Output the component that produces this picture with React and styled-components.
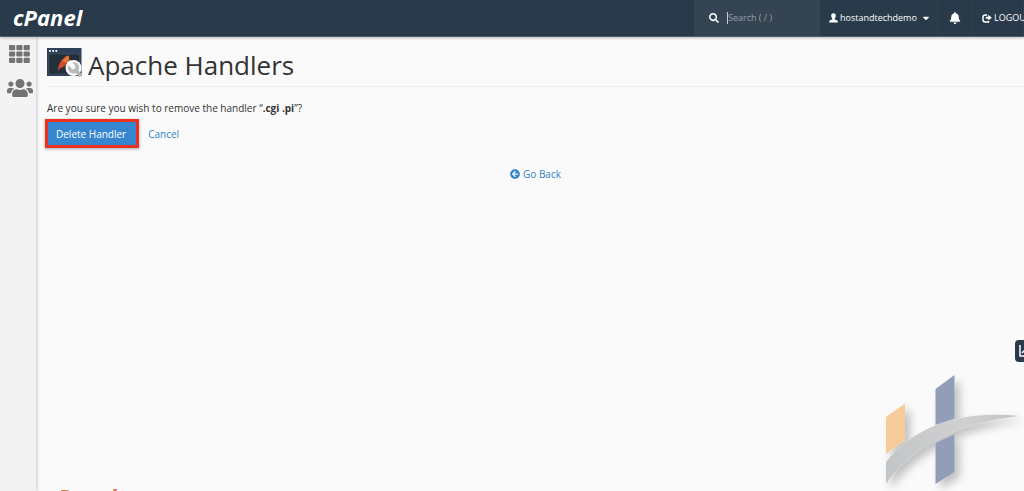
import React, { useState } from "react";
import styled, { createGlobalStyle } from "styled-components";
import { FaSearch, FaBell, FaCaretDown, FaUsers, FaArrowCircleLeft } from "react-icons/fa";


const GlobalStyle = createGlobalStyle`
    * {
        box-sizing: border-box;
    }

    body {
        margin: 0;
        background: #fafafa;
        color: #333333;
        font-family: "Open Sans", "Noto Sans", sans-serif;
        font-size: 10px;
        line-height: 16px;
    }

    a {
        color: #2f83c9;
        text-decoration: none;
    }

    svg {
        flex-shrink: 0;
    }
`;

const Page = styled.div`
    position: relative;
    display: flex;
    flex-direction: column;
    height: 100vh;
    overflow: hidden;
`;

const Header = styled.header`
    display: flex;
    flex-shrink: 0;
    height: 37px;
    overflow: hidden;
    background: #293a4a;
    border-bottom: 1px solid #4c5d6d;
`;

const HeaderShadow = styled.div`
    position: relative;
    z-index: 1;
    box-shadow: 0 1px 3px rgba(0, 0, 0, 0.25);
`;

const Brand = styled.a`
    color: ${(props) => props.$color || "#ffffff"};
    font-family: "Open Sans", sans-serif;
    font-size: 22px;
    font-style: italic;
    font-weight: 700;
    line-height: 34px;
`;

const HomeLink = styled.div`
    flex: 1;
    padding-left: 13px;
`;

const SearchBox = styled.label`
    display: flex;
    align-items: center;
    gap: 8px;
    width: 126px;
    padding-left: 15px;
    background: #354453;
    color: #ffffff;
`;

const Caret = styled.span`
    width: 1px;
    height: 12px;
    margin-right: -8px;
    background: #c5cbd1;
`;

const SearchInput = styled.input`
    width: 80px;
    padding: 0;
    border: 0;
    outline: 0;
    background: transparent;
    color: #ffffff;
    font: inherit;
    font-size: 9px;

    &::placeholder {
        color: #98a0a8;
        opacity: 1;
    }
`;

const NavButton = styled.button`
    display: flex;
    align-items: center;
    justify-content: ${(props) => (props.$center ? "center" : "flex-start")};
    gap: 2px;
    flex-shrink: 0;
    width: ${(props) => props.$width};
    padding: 0 0 0 ${(props) => props.$pad || "0"};
    border: 0;
    border-right: 1px solid #30404f;
    background: transparent;
    color: #ffffff;
    font: inherit;
    font-size: 9px;
    white-space: nowrap;

    span {
        margin-right: 2px;
    }
`;

const Body = styled.div`
    display: flex;
    flex: 1;
    min-height: 0;
`;

const Sidebar = styled.nav`
    display: flex;
    flex-direction: column;
    align-items: center;
    gap: 12px;
    flex-shrink: 0;
    width: 36px;
    padding: 8px 0 0 3px;
    background: #f3f3f3;
    box-shadow: 1px 0 3px rgba(0, 0, 0, 0.2);
`;

const SideLink = styled.a`
    display: flex;
    color: #737373;
`;

const Content = styled.main`
    display: flex;
    flex-direction: column;
    flex: 1;
    padding: 8px 0 0 11px;
`;

const PageHeading = styled.h1`
    display: flex;
    align-items: center;
    gap: 6px;
    margin: 0 0 13px;
    padding-bottom: 1px;
    border-bottom: 1px solid #eeeeee;
    font-size: 26px;
    font-weight: 400;
    line-height: 40px;
`;

const Message = styled.p`
    margin: 0 0 3px;
`;

const Actions = styled.div`
    display: flex;
    align-items: center;
    gap: 9px;
    margin-left: -2px;
`;

const DeleteButton = styled.button`
    height: 29px;
    padding: 0 10px 0 8px;
    border: 3px solid #e8321f;
    background: #3686cf;
    box-shadow: 0 1px 3px rgba(0, 0, 0, 0.35);
    color: #ffffff;
    font: inherit;
`;

const BackLink = styled.a`
    display: flex;
    align-items: center;
    align-self: center;
    gap: 3px;
    margin-top: 18px;
`;

const Footer = styled.footer`
    display: flex;
    height: 12px;
    margin-top: auto;
`;

const StatsButton = styled.button`
    position: absolute;
    top: 340px;
    right: -13px;
    display: flex;
    align-items: center;
    width: 22px;
    height: 22px;
    padding: 0 0 0 4px;
    border: 0;
    border-radius: 4px;
    background: #293a4a;
`;

const Watermark = styled.svg`
    position: absolute;
    right: 0;
    bottom: 0;
    pointer-events: none;
`;

const HandlerIcon = () => (
    <svg width="35" height="34" viewBox="0 0 35 34" aria-hidden="true">
        <rect width="34.5" height="28" fill="#2e4058" />
        <rect x="2" y="6" width="30.5" height="20" fill="#21303a" stroke="#46566a" strokeWidth="0.6" />
        <g fill="#ffffff">
            <rect x="2" y="2" width="1.8" height="1.8" />
            <rect x="5.2" y="2" width="1.8" height="1.8" />
            <rect x="8.4" y="2" width="1.8" height="1.8" />
        </g>
        <path d="M11 22.5C11 17.5 14 10.5 21 7.5c1.6 1 1.4 3.5.4 5.5C19.5 17 16 19.8 12.8 20.2L11.5 22.8Z" fill="#cf4b28" />
        <path d="M15 13C16.8 10 19 8.3 21 7.5c1.6 1 1.4 3.5.4 5.5L20 15.2Z" fill="#e9722f" />
        <circle cx="26.5" cy="20" r="8" fill="#fafafa" />
        <path d="M28.5 22 33 27" fill="none" stroke="#b9b9b9" strokeWidth="3.6" strokeLinecap="round" />
        <circle cx="26.5" cy="19.8" r="5.6" fill="#b9b9b9" />
        <path d="M20 15 25.2 21.5 28.4 20.2 27.8 17 23 12Z" fill="#fafafa" />
    </svg>
);

const UserIcon = () => (
    <svg width="9" height="10" viewBox="0 0 9 10" fill="currentColor" aria-hidden="true">
        <path d="M4.5.2C6.1.2 6.9 1.3 6.8 2.8 6.7 4.2 6 5 5.7 5.5v.8c.6.6 3.1.9 3.1 2.2v1H.2v-1c0-1.3 2.5-1.6 3.1-2.2v-.8C3 5 2.3 4.2 2.2 2.8 2.1 1.3 2.9.2 4.5.2Z" />
    </svg>
);

const LogoutIcon = () => (
    <svg width="10" height="9" viewBox="0 0 10 9" aria-hidden="true">
        <path d="M5.2 1H3.3C1.8 1 1 1.8 1 3.2v2.6C1 7.2 1.8 8 3.3 8h3.2V7" fill="none" stroke="currentColor" strokeWidth="1.5" />
        <path d="M6.3.8 9.8 3.7 6.3 6.5V4.7H3.8v-2h2.5Z" fill="currentColor" />
    </svg>
);

const GridIcon = () => (
    <svg width="21" height="18" viewBox="0 0 21 18" fill="currentColor" aria-hidden="true">
        {[0, 1, 2].map((row) =>
            [0, 1, 2].map((col) => (
                <rect key={`${row}-${col}`} x={col * 7.3} y={row * 6.4} width="6.2" height="5.2" rx="1" />
            ))
        )}
    </svg>
);

const HostLogo = () => (
    <Watermark width="160" height="161" viewBox="0 0 160 161" aria-hidden="true">
        <defs>
            <linearGradient id="swoosh">
                <stop offset="0" stopColor="#c3c6c8" />
                <stop offset="0.6" stopColor="#cfd0d1" />
                <stop offset="1" stopColor="#c0c2c3" />
            </linearGradient>
            <filter id="soft" x="-20%" y="-20%" width="150%" height="150%">
                <feDropShadow dx="5" dy="5" stdDeviation="4" floodColor="#000000" floodOpacity="0.24" />
            </filter>
        </defs>
        <g filter="url(#soft)">
            <path d="M22 87 41 73.5V110.5L22 124Z" fill="#f6cc9b" />
            <path d="M71.5 59 90.5 45V88.5L71.5 95Z" fill="#929db7" />
            <path d="M71.5 113 90.5 104V142L71.5 154Z" fill="#929db7" />
            <path d="M22 132C50 98 92 80 155 86C100 92 50 113 22 154Z" fill="url(#swoosh)" />
        </g>
    </Watermark>
);


const App = () => {
    const [search, setSearch] = useState("");

    return (
        <Page>
            <GlobalStyle />
            <HeaderShadow>
                <Header>
                    <HomeLink>
                        <Brand href="#home">cPanel</Brand>
                    </HomeLink>
                    <SearchBox>
                        <FaSearch size={10} />
                        <Caret />
                        <SearchInput
                            aria-label="Search"
                            placeholder="Search ( / )"
                            value={search}
                            onChange={(e) => setSearch(e.target.value)}
                        />
                    </SearchBox>
                    <NavButton $width="118px" $pad="9px">
                        <UserIcon />
                        <span>hostandtechdemo</span>
                        <FaCaretDown size={10} />
                    </NavButton>
                    <NavButton $width="35px" $center aria-label="Notifications">
                        <FaBell size={12} />
                    </NavButton>
                    <NavButton $width="51px" $pad="9px">
                        <LogoutIcon />
                        LOGOUT
                    </NavButton>
                </Header>
            </HeaderShadow>
            <Body>
                <Sidebar>
                    <SideLink href="#tools" aria-label="Tools"><GridIcon /></SideLink>
                    <SideLink href="#users" aria-label="User Manager"><FaUsers size={26} /></SideLink>
                </Sidebar>
                <Content>
                    <PageHeading>
                        <HandlerIcon />
                        Apache Handlers
                    </PageHeading>
                    <Message>
                        Are you sure you wish to remove the handler “<b>.cgi .pi</b>”?
                    </Message>
                    <Actions>
                        <DeleteButton>Delete Handler</DeleteButton>
                        <a href="#cancel">Cancel</a>
                    </Actions>
                    <BackLink href="#back">
                        <FaArrowCircleLeft size={10} />
                        Go Back
                    </BackLink>
                    <Footer>
                        <Brand href="#cpanel" $color="#e8743f">cPanel</Brand>
                    </Footer>
                </Content>
            </Body>
            <HostLogo />
            <StatsButton aria-label="Statistics">
                <svg width="14" height="12" viewBox="0 0 14 12" fill="none" stroke="#ffffff" strokeWidth="1.5" aria-hidden="true">
                    <path d="M1 0v11h13M3 8l3-3 2 2 5-5" />
                </svg>
            </StatsButton>
        </Page>
    );
};

export default App;
